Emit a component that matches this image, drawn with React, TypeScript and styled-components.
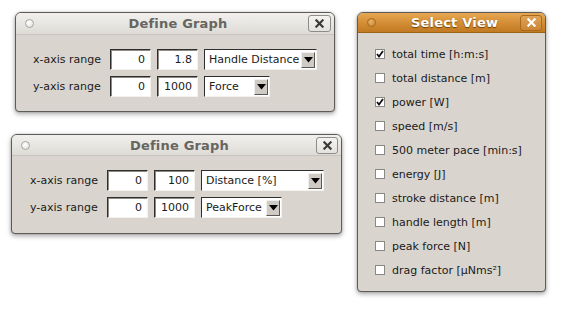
import React from "react";
import styled, { createGlobalStyle, css } from "styled-components";

const Global = createGlobalStyle`
  html, body { margin: 0; padding: 0; background: #ffffff; }
  body { font-family: "DejaVu Sans", "Liberation Sans", sans-serif; font-size: 11px; color: #1a1a1a; }
`;

const Desktop = styled.div`
  position: relative;
  width: 562px;
  height: 311px;
  overflow: hidden;
  background: #ffffff;
`;

const Win = styled.div<{ $x: number; $y: number; $w: number; $h: number }>`
  position: absolute;
  left: ${(p) => p.$x}px;
  top: ${(p) => p.$y}px;
  width: ${(p) => p.$w}px;
  height: ${(p) => p.$h}px;
  box-sizing: border-box;
  display: flex;
  flex-direction: column;
  background: #d9d5ce;
  border: 1px solid #5e5c58;
  border-radius: 6px 6px 4px 4px;
  box-shadow: 0 2px 5px rgba(0, 0, 0, 0.35), 0 0 2px rgba(0, 0, 0, 0.2);
  overflow: hidden;
`;

const TitleBar = styled.div<{ $active?: boolean; $h: number }>`
  height: ${(p) => p.$h}px;
  flex: none;
  display: grid;
  grid-template-columns: 1fr auto 1fr;
  align-items: center;
  padding: 0 3px 0 9px;
  box-sizing: border-box;
  ${(p) =>
    p.$active
      ? css`
          background: linear-gradient(#e7a751, #d08a32 60%, #c27a22);
          border-bottom: 1px solid #9b6419;
        `
      : css`
          background: linear-gradient(#f1f0ee, #e6e4e0 60%, #dedbd6);
          border-bottom: 1px solid #c9c5be;
        `}
`;

const Dot = styled.span<{ $active?: boolean }>`
  width: 7px;
  height: 7px;
  border-radius: 50%;
  justify-self: start;
  ${(p) =>
    p.$active
      ? css`
          border: 1px solid #a9671c;
          background: radial-gradient(circle at 40% 35%, #e6b06a, #c8852f);
        `
      : css`
          border: 1px solid #a8a6a2;
          background: radial-gradient(circle at 40% 35%, #ffffff, #e0ded9);
        `}
`;

const Title = styled.span<{ $active?: boolean }>`
  font-weight: bold;
  font-size: 13px;
  letter-spacing: 0.2px;
  color: ${(p) => (p.$active ? "#ffffff" : "#67655f")};
  text-shadow: ${(p) => (p.$active ? "0 1px 1px #6b3e08" : "none")};
`;

const CloseBtn = styled.span<{ $active?: boolean; $w: number; $h: number }>`
  justify-self: end;
  width: ${(p) => p.$w}px;
  height: ${(p) => p.$h}px;
  box-sizing: border-box;
  border-radius: 3px;
  display: flex;
  align-items: center;
  justify-content: center;
  ${(p) =>
    p.$active
      ? css`
          border: 1px solid #a66a20;
          background: linear-gradient(#e0a458, #cc8634);
          color: #ffffff;
        `
      : css`
          border: 1px solid #8e8c88;
          background: linear-gradient(#f4f3f1, #e4e2de);
          color: #3a3a3a;
        `}
`;

const Body = styled.div<{ $pl: number; $pt: number }>`
  flex: 1;
  padding: ${(p) => p.$pt}px 0 0 ${(p) => p.$pl}px;
`;

const Form = styled.div<{ $cols: string }>`
  display: grid;
  grid-template-columns: ${(p) => p.$cols};
  column-gap: 6px;
  row-gap: 6px;
  align-items: center;
`;

const Label = styled.span`
  white-space: nowrap;
`;

const Field = styled.div`
  height: 21px;
  box-sizing: border-box;
  background: #ffffff;
  border-top: 1px solid #2e2e2e;
  border-left: 1px solid #2e2e2e;
  border-right: 1px solid #f4f2ef;
  border-bottom: 1px solid #f4f2ef;
  box-shadow: 1px 1px 0 #8e8b86 inset;
  display: flex;
  align-items: center;
  justify-content: flex-end;
  padding: 0 5px;
  font-size: 11px;
`;

const Select = styled.div<{ $w: number }>`
  width: ${(p) => p.$w}px;
  height: 21px;
  box-sizing: border-box;
  background: #ffffff;
  border-top: 1px solid #2e2e2e;
  border-left: 1px solid #2e2e2e;
  border-right: 1px solid #f4f2ef;
  border-bottom: 1px solid #f4f2ef;
  display: flex;
  align-items: center;
  padding: 0 1px 0 4px;
  font-size: 11px;
`;

const SelText = styled.span`
  flex: 1;
  white-space: nowrap;
  overflow: hidden;
`;

const Arrow = styled.span`
  width: 14px;
  height: 16px;
  flex: none;
  box-sizing: border-box;
  background: #cfcbc4;
  border-top: 1px solid #f2f0ec;
  border-left: 1px solid #f2f0ec;
  border-right: 1px solid #5a5854;
  border-bottom: 1px solid #5a5854;
  display: flex;
  align-items: center;
  justify-content: center;
`;

const List = styled.div`
  display: flex;
  flex-direction: column;
`;

const Row = styled.label`
  height: 24px;
  display: flex;
  align-items: center;
  gap: 7px;
  font-size: 11px;
`;

const Box = styled.span`
  width: 10px;
  height: 10px;
  box-sizing: border-box;
  background: #ffffff;
  border: 1px solid #8b8884;
  display: flex;
  align-items: center;
  justify-content: center;
`;

const XIcon = ({ size = 9, width = 2.4 }: { size?: number; width?: number }) => (
  <svg width={size} height={size} viewBox="0 0 10 10">
    <path d="M1.5 1.5 L8.5 8.5 M8.5 1.5 L1.5 8.5" stroke="currentColor" strokeWidth={width} strokeLinecap="square" />
  </svg>
);

const Tri = () => (
  <svg width="9" height="6" viewBox="0 0 9 6">
    <path d="M0 0 H9 L4.5 5.5 Z" fill="#000" />
  </svg>
);

const Check = () => (
  <svg width="8" height="8" viewBox="0 0 8 8">
    <path d="M1 4 L3 6.5 L7 1" stroke="#111" strokeWidth="1.8" fill="none" />
  </svg>
);

type GraphProps = {
  x: number; y: number; w: number; h: number; titleH: number; pl: number; pt: number;
  cols: string; closeW: number; closeH: number;
  rows: { label: string; a: string; b: string; sel: string; selW: number }[];
};

const DefineGraph = (p: GraphProps) => (
  <Win $x={p.x} $y={p.y} $w={p.w} $h={p.h}>
    <TitleBar $h={p.titleH}>
      <Dot />
      <Title>Define Graph</Title>
      <CloseBtn $w={p.closeW} $h={p.closeH}>
        <XIcon />
      </CloseBtn>
    </TitleBar>
    <Body $pl={p.pl} $pt={p.pt}>
      <Form $cols={p.cols}>
        {p.rows.map((r) => (
          <React.Fragment key={r.label}>
            <Label>{r.label}</Label>
            <Field>{r.a}</Field>
            <Field>{r.b}</Field>
            <Select $w={r.selW}>
              <SelText>{r.sel}</SelText>
              <Arrow>
                <Tri />
              </Arrow>
            </Select>
          </React.Fragment>
        ))}
      </Form>
    </Body>
  </Win>
);

const views: [string, boolean][] = [
  ["total time [h:m:s]", true],
  ["total distance [m]", false],
  ["power [W]", true],
  ["speed [m/s]", false],
  ["500 meter pace [min:s]", false],
  ["energy [J]", false],
  ["stroke distance [m]", false],
  ["handle length [m]", false],
  ["peak force [N]", false],
  ["drag factor [µNms²]", false],
];

export default function App() {
  return (
    <>
      <Global />
      <Desktop>
        <DefineGraph
          x={15} y={12} w={320} h={100} titleH={22} pl={17} pt={14}
          cols="71px 41px 41px auto" closeW={23} closeH={17}
          rows={[
            { label: "x-axis range", a: "0", b: "1.8", sel: "Handle Distance", selW: 113 },
            { label: "y-axis range", a: "0", b: "1000", sel: "Force", selW: 66 },
          ]}
        />
        <DefineGraph
          x={11} y={134} w={331} h={100} titleH={21} pl={18} pt={14}
          cols="71px 41px 41px auto" closeW={22} closeH={17}
          rows={[
            { label: "x-axis range", a: "0", b: "100", sel: "Distance [%]", selW: 123 },
            { label: "y-axis range", a: "0", b: "1000", sel: "PeakForce", selW: 81 },
          ]}
        />
        <Win $x={357} $y={12} $w={189} $h={280}>
          <TitleBar $active $h={20}>
            <Dot $active />
            <Title $active>Select View</Title>
            <CloseBtn $active $w={22} $h={16}>
              <XIcon />
            </CloseBtn>
          </TitleBar>
          <Body $pl={17} $pt={9}>
            <List>
              {views.map(([t, c]) => (
                <Row key={t}>
                  <Box>{c && <Check />}</Box>
                  {t}
                </Row>
              ))}
            </List>
          </Body>
        </Win>
      </Desktop>
    </>
  );
}
